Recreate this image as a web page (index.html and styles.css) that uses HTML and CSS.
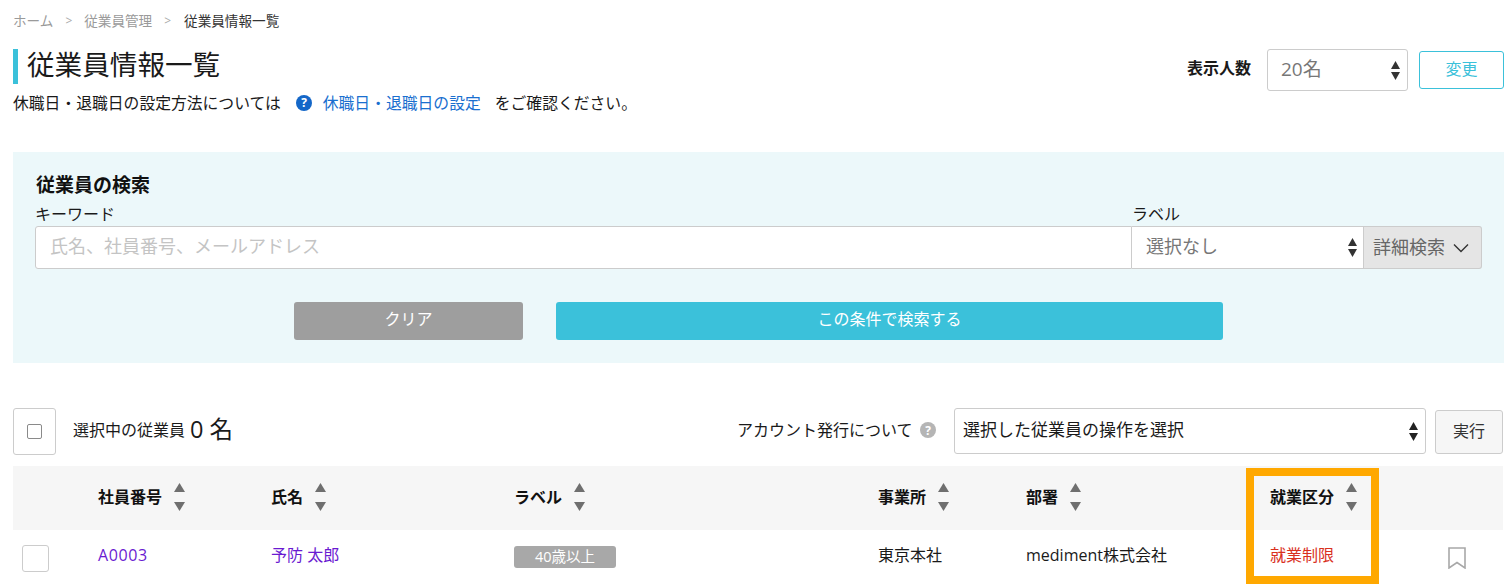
FILE: index.html
```html
<!DOCTYPE html>
<html lang="ja">
<head>
<meta charset="utf-8">
<title>従業員情報一覧</title>
<link rel="stylesheet" href="styles.css">
</head>
<body>
<svg class="defs" width="0" height="0" aria-hidden="true">
  <symbol id="updown" viewBox="0 0 9 19"><path d="M4.5 0 L9 8 H0 Z"/><path d="M0 11 H9 L4.5 19 Z"/></symbol>
  <symbol id="sortarrows" viewBox="0 0 11 28"><path d="M5.5 0 L11 9 H0 Z"/><path d="M0 19 H11 L5.5 28 Z"/></symbol>
</svg>
<main class="page">
  <nav class="crumbs">
    <span class="crumb">ホーム</span><span class="sep">&gt;</span>
    <span class="crumb">従業員管理</span><span class="sep">&gt;</span>
    <span class="crumb-current">従業員情報一覧</span>
  </nav>
  <header class="head">
    <div class="head-left">
      <h1 class="title">従業員情報一覧</h1>
      <p class="notice">休職日・退職日の設定方法については
        <svg class="help" viewBox="0 0 16 16" width="16" height="16"><circle cx="8" cy="8" r="8" fill="#1467c8"/><text x="8" y="12" class="help-text">?</text></svg>
        <a class="link">休職日・退職日の設定</a>
        <span class="notice-end">をご確認ください。</span>
      </p>
    </div>
    <div class="head-right">
      <span class="count-label">表示人数</span>
      <div class="select count-select"><span class="muted">20名</span><svg class="arrows"><use href="#updown"/></svg></div>
      <button class="change-btn">変更</button>
    </div>
  </header>

  <section class="search">
    <h2 class="search-title">従業員の検索</h2>
    <div class="fields">
      <div class="field-key">
        <label class="field-label">キーワード</label>
        <div class="input">氏名、社員番号、メールアドレス</div>
      </div>
      <div class="field-tag">
        <label class="field-label">ラベル</label>
        <div class="select tag-select"><span class="muted">選択なし</span><svg class="arrows"><use href="#updown"/></svg></div>
      </div>
      <button class="detail-btn">詳細検索<svg class="chev" viewBox="0 0 16 10" width="16" height="10"><path d="M1 1.5 L8 8.5 L15 1.5" fill="none" stroke="#333" stroke-width="1.4"/></svg></button>
    </div>
    <div class="actions">
      <button class="btn-clear">クリア</button>
      <button class="btn-search">この条件で検索する</button>
    </div>
  </section>

  <section class="toolbar">
    <div class="check-box"><span class="check-inner"></span></div>
    <div class="selected">選択中の従業員<span class="selected-num">0 名</span></div>
    <div class="account">アカウント発行について
      <svg class="help-gray" viewBox="0 0 16 16" width="16" height="16"><circle cx="8" cy="8" r="8" fill="#b5b5b5"/><text x="8" y="12.5" class="help-text">?</text></svg>
    </div>
    <div class="select op-select"><span>選択した従業員の操作を選択</span><svg class="arrows"><use href="#updown"/></svg></div>
    <button class="run-btn">実行</button>
  </section>

  <section class="table-wrap">
    <table class="table">
      <colgroup>
        <col class="c-check"><col class="c-id"><col class="c-name"><col class="c-tag"><col class="c-office"><col class="c-dept"><col class="c-status"><col class="c-mark">
      </colgroup>
      <thead>
        <tr>
          <th></th>
          <th><span class="th">社員番号<svg class="sort"><use href="#sortarrows"/></svg></span></th>
          <th><span class="th">氏名<svg class="sort"><use href="#sortarrows"/></svg></span></th>
          <th><span class="th">ラベル<svg class="sort"><use href="#sortarrows"/></svg></span></th>
          <th><span class="th">事業所<svg class="sort"><use href="#sortarrows"/></svg></span></th>
          <th><span class="th">部署<svg class="sort"><use href="#sortarrows"/></svg></span></th>
          <th><span class="th">就業区分<svg class="sort"><use href="#sortarrows"/></svg></span></th>
          <th></th>
        </tr>
      </thead>
      <tbody>
        <tr>
          <td class="cell-check"><span class="row-check"></span></td>
          <td><a class="visited code">A0003</a></td>
          <td><a class="visited">予防 太郎</a></td>
          <td><span class="tag">40歳以上</span></td>
          <td>東京本社</td>
          <td>mediment株式会社</td>
          <td class="limit">就業制限</td>
          <td class="cell-mark"><svg class="mark" viewBox="0 0 18 22" width="18" height="22"><path d="M1 1 H17 V21 L9 15.5 L1 21 Z" fill="none" stroke="#a8a8a8" stroke-width="1.6"/></svg></td>
        </tr>
      </tbody>
    </table>
    <div class="highlight"></div>
  </section>
</main>
</body>
</html>
```
FILE: styles.css
```css
* { box-sizing: border-box; }
html, body { margin: 0; height: 584px; overflow: hidden; background: #fff; }
body {
  font-family: "Open Sans", "Noto Sans CJK JP", sans-serif;
  font-size: 16px;
  color: #1a1a1a;
  line-height: 24px;
}
button { font-family: inherit; cursor: pointer; }
.defs { position: absolute; }
.page { padding: 0 8px 0 13px; }

.crumbs { height: 42px; display: flex; align-items: center; font-size: 13.6px; color: #9a9a9a; }
.crumb-current { color: #333; margin-left: 1px; }
.sep { margin: 0 12px 0 12px; font-size: 12px; color: #aaa; }

.head { display: flex; justify-content: space-between; align-items: flex-start; padding-top: 7px; height: 110px; }
.title {
  margin: 0;
  height: 35px;
  line-height: 31px;
  font-size: 27.6px;
  font-weight: 400;
  border-left: 5px solid #3bc1da;
  padding-left: 9px;
}
.notice { margin: 7px 0 0; display: flex; align-items: center; line-height: 24px; font-size: 15.8px; }
.help { margin: 0 11px 0 15px; }
.help-text { font: bold 12px "Open Sans", sans-serif; fill: #fff; text-anchor: middle; }
.link { color: #1a6fcf; }
.notice-end { margin-left: 14px; }

.head-right { display: flex; align-items: center; height: 42px; }
.count-label { font-weight: 700; font-size: 16px; margin-right: 16px; padding-bottom: 4px; }
.select {
  display: flex; align-items: center; justify-content: space-between;
  background: #fff; border: 1px solid #ccc; border-radius: 3px;
}
.select > span { padding-bottom: 3px; }
.muted { color: #777; }
.arrows { width: 9px; height: 19px; fill: #333; }
.count-select { width: 141px; height: 42px; padding: 0 7px 0 13px; font-size: 19px; }
.change-btn {
  width: 85px; height: 38px; margin-left: 11px;
  border: 1px solid #3bc1da; border-radius: 3px; background: #fff;
  color: #3bc1da; font-size: 16px; padding: 0 0 5px;
}

.search { height: 211px; background: #ecf8fa; padding: 21px 22px 0; }
.search-title { margin: 0; font-size: 19px; font-weight: 700; line-height: 24px; color: #111; padding-left: 1px; }
.fields { display: flex; align-items: flex-end; margin-top: 5px; }
.field-key { width: 1097px; }
.field-tag { width: 232px; }
.field-label { display: block; line-height: 24px; }
.input {
  height: 43px; background: #fff; border: 1px solid #ccc; border-radius: 3px 0 0 3px;
  padding: 0 14px 3px; display: flex; align-items: center; color: #c4c4c4; font-size: 18px;
}
.tag-select { height: 43px; border-radius: 0; border-left: 0; padding: 0 6px 0 14px; font-size: 18px; }
.detail-btn {
  width: 118px; height: 43px; display: flex; align-items: center; justify-content: flex-start; gap: 8px;
  background: #e5e5e5; border: 1px solid #ccc; border-left: 0; border-radius: 0 3px 3px 0;
  color: #666; font-size: 18px; padding: 0 0 4px 9px; white-space: nowrap;
}
.chev { margin-top: 4px; }
.actions { display: flex; margin: 33px 0 0 259px; gap: 33px; }
.btn-clear, .btn-search { height: 38px; border: 0; border-radius: 3px; color: #fff; font-size: 16px; padding: 0 0 6px; }
.btn-clear { width: 229px; background: #9e9e9e; }
.btn-search { width: 667px; background: #3bc1da; }

.toolbar { display: flex; align-items: center; height: 48px; margin-top: 44px; }
.check-box {
  width: 43px; height: 47px; border: 1px solid #ccc; border-radius: 3px;
  display: flex; align-items: center; justify-content: center; background: #fff;
}
.check-inner { width: 15px; height: 15px; border: 1.5px solid #8a8a8a; border-radius: 2px; }
.selected { margin-left: 17px; width: 664px; display: flex; align-items: center; padding-bottom: 2px; }
.selected-num { font-size: 23.5px; margin-left: 5px; padding-bottom: 2px; }
.account { display: flex; align-items: center; width: 217px; padding-bottom: 2px; }
.help-gray { margin-left: 7px; }
.op-select { width: 472px; height: 46px; padding: 0 7px 0 8px; font-size: 17px; }
.op-select .arrows { fill: #222; }
.run-btn {
  width: 68px; height: 44px; margin-left: 9px; margin-top: 2px;
  background: #f6f6f6; border: 1px solid #ccc; border-radius: 3px; color: #333; font-size: 16px; padding: 0 0 5px;
}

.table-wrap { position: relative; margin-top: 11px; width: 1490px; }
.table { width: 1490px; table-layout: fixed; border-collapse: collapse; }
.c-check { width: 85px; }
.c-id { width: 173px; }
.c-name { width: 243px; }
.c-tag { width: 364px; }
.c-office { width: 148px; }
.c-dept { width: 244px; }
.c-status { width: 160px; }
.c-mark { width: 73px; }
thead tr { background: #f6f6f6; height: 64px; }
th { padding: 0 0 2px; text-align: left; font-size: 16px; font-weight: 700; }
.th { display: inline-flex; align-items: center; gap: 12px; color: #111; }
.sort { width: 11px; height: 28px; fill: #6f6f6f; }
tbody tr { height: 54px; }
td { padding: 0 0 4px; vertical-align: middle; }
.visited { color: #6a1bd1; }
.code { letter-spacing: 0.6px; }
.cell-check { padding: 2px 0 0 9px; }
.row-check { display: block; width: 27px; height: 27px; border: 1px solid #ccc; border-radius: 3px; background: #fff; }
.tag {
  display: inline-block; width: 102px; height: 22px; line-height: 21px; text-align: center;
  background: #a8a8a8; color: #fff; border-radius: 3px; font-size: 14.5px; margin-top: 4px;
}
.limit { color: #d9301e; }
.cell-mark { padding: 0 0 0 18px; }
.mark { display: block; margin-top: 2px; }
.highlight {
  position: absolute; left: 1233px; top: 2px; width: 133px; height: 116px;
  border: 8px solid #ffa800;
}
```
